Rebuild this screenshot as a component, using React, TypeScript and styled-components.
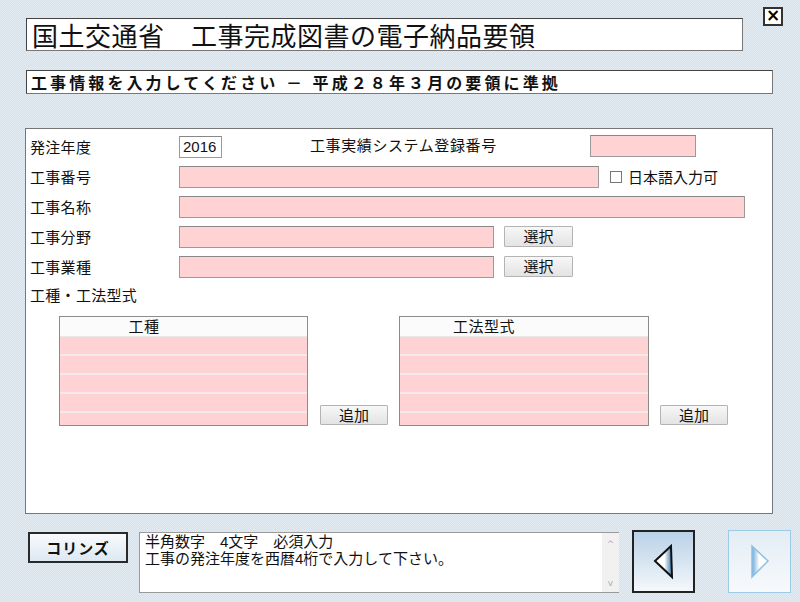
import React from 'react';
import styled, { createGlobalStyle } from 'styled-components';

const pink = '#ffd3d3';
const jp = `"Liberation Sans", "Noto Sans CJK JP", sans-serif`;

const GlobalStyle = createGlobalStyle`
  html, body {
    margin: 0;
    padding: 0;
  }
  body {
    font-family: ${jp};
    color: #111;
  }
`;

const Screen = styled.div`
  box-sizing: border-box;
  width: 800px;
  height: 602px;
  padding: 7px 9px 0 25px;
  background-color: #dce6ef;
  background-image: repeating-conic-gradient(#d6e1ec 0 25%, #e4ecf3 0 50%);
  background-size: 2px 2px;
  overflow: hidden;
`;

const Header = styled.div`
  display: flex;
  align-items: flex-start;
`;

const TitleBox = styled.div`
  box-sizing: border-box;
  width: 717px;
  height: 33px;
  margin: 11px 0 0 1px;
  padding-left: 5px;
  display: flex;
  align-items: center;
  background: #fff;
  border: 1px solid #444;
  border-right-color: #777;
  border-bottom-color: #777;
  font-size: 26px;
  letter-spacing: 0.5px;
  white-space: pre;
`;

const CloseButton = styled.button`
  box-sizing: border-box;
  width: 20px;
  height: 19px;
  margin: 0 8px 0 auto;
  padding: 0 0 2px;
  display: flex;
  align-items: center;
  justify-content: center;
  background: #fff;
  border: 2px solid #333;
  font-family: "DejaVu Sans", sans-serif;
  font-size: 17px;
  font-weight: bold;
  line-height: 1;
  color: #000;
`;

const SubTitleBox = styled.div`
  box-sizing: border-box;
  width: 747px;
  height: 24px;
  margin: 19px 0 0 1px;
  padding-left: 4px;
  display: flex;
  align-items: center;
  background: #fff;
  border: 1px solid #444;
  border-right-color: #777;
  border-bottom-color: #777;
  font-size: 16px;
  font-weight: bold;
  letter-spacing: 3.1px;
  white-space: pre;
`;

const Panel = styled.div`
  box-sizing: border-box;
  width: 748px;
  height: 386px;
  margin-top: 34px;
  padding: 7px 0 0 4px;
  background: #fff;
  border: 1px solid #777;
  display: flex;
  flex-direction: column;
  gap: 9px;
`;

const Row = styled.div`
  display: flex;
  align-items: center;
  height: 21px;
  font-size: 15px;
`;

const Label = styled.div`
  width: 149px;
  flex: none;
  font-size: 15px;
  letter-spacing: 0.3px;
`;

const Field = styled.div<{ $w: number; $white?: boolean }>`
  box-sizing: border-box;
  flex: none;
  width: ${(p) => p.$w}px;
  height: 22px;
  padding: 0 3px;
  display: flex;
  align-items: center;
  background: ${(p) => (p.$white ? '#fff' : pink)};
  border: 1px solid #9a9a9a;
  border-top-color: #888;
  font-size: 15px;
`;

const RegField = styled(Field)`
  margin-top: -2px;
`;

const RegLabel = styled.div`
  width: 280px;
  margin-left: 88px;
  margin-top: -4px;
  letter-spacing: 0.6px;
`;

const CheckBox = styled.span`
  box-sizing: border-box;
  width: 12px;
  height: 12px;
  margin: 0 6px 0 11px;
  border: 1px solid #777;
  background: #fff;
`;

const GrayButton = styled.button<{ $ml: number }>`
  box-sizing: border-box;
  flex: none;
  width: 69px;
  height: 21px;
  margin-left: ${(p) => p.$ml}px;
  padding: 0;
  background: linear-gradient(#f7f7f7, #e3e3e3);
  border: 1px solid #b4b4b4;
  border-radius: 1px;
  font-family: ${jp};
  font-size: 15px;
  line-height: 1;
  color: #111;
`;

const SectionLabel = styled.div`
  height: 18px;
  font-size: 15px;
  letter-spacing: 0.3px;
  line-height: 18px;
  margin-top: 1px;
`;

const TablesRow = styled.div`
  display: flex;
  align-items: flex-end;
  margin: 2px 0 0 29px;
`;

const Table = styled.div<{ $w: number; $ml?: number }>`
  box-sizing: border-box;
  flex: none;
  width: ${(p) => p.$w}px;
  height: 110px;
  margin-left: ${(p) => p.$ml ?? 0}px;
  border: 1px solid #8c8c8c;
  display: flex;
  flex-direction: column;
  background: #f4eaea;
`;

const TableHead = styled.div`
  height: 19px;
  flex: none;
  background: #fbfbfb;
  border-bottom: 1px solid #e8e8e8;
  display: flex;
`;

const HeadCell = styled.div`
  width: 168px;
  text-align: center;
  font-size: 15px;
  line-height: 19px;
  letter-spacing: 0.5px;
`;

const TableBody = styled.div`
  flex: 1;
  display: grid;
  grid-template-rows: repeat(4, 17px) 1fr;
  row-gap: 2px;
`;

const TableRow = styled.div`
  background: ${pink};
`;

const AddButton = styled(GrayButton)`
  width: 68px;
  height: 20px;
  margin-bottom: 1px;
`;

const Bottom = styled.div`
  display: flex;
  align-items: flex-start;
  margin-top: 16px;
  & > * {
    flex: none;
  }
`;

const CollinsButton = styled.button`
  box-sizing: border-box;
  width: 100px;
  height: 31px;
  margin: 2px 0 0 3px;
  padding: 0;
  background: linear-gradient(#f9fbfd, #dce8f3);
  border: 2px solid #2a2a2a;
  font-family: ${jp};
  font-size: 15px;
  font-weight: bold;
  letter-spacing: 1px;
  color: #111;
`;

const MessageBox = styled.div`
  box-sizing: border-box;
  width: 480px;
  height: 61px;
  margin: 2px 0 0 11px;
  display: flex;
  background: #fff;
  border: 1px solid #9a9a9a;
  border-right: none;
`;

const MessageText = styled.div`
  flex: 1;
  padding: 0 5px;
  font-size: 15px;
  line-height: 17px;
  white-space: pre;
`;

const ScrollBar = styled.div`
  width: 17px;
  background: #f1f1f1;
  display: flex;
  flex-direction: column;
  justify-content: space-between;
  align-items: center;
  padding: 6px 0 4px;
  color: #b0b0b0;
  font-size: 9px;
  font-family: "DejaVu Sans", sans-serif;
`;

const NavButton = styled.button<{ $disabled?: boolean; $ml: number }>`
  box-sizing: border-box;
  width: 63px;
  height: 63px;
  margin-left: ${(p) => p.$ml}px;
  padding: 0;
  display: flex;
  align-items: center;
  justify-content: center;
  border: ${(p) => (p.$disabled ? '1px solid #9ccbe6' : '2px solid #222')};
  background: ${(p) =>
    p.$disabled
      ? 'linear-gradient(#e3ecf5, #f7fafc)'
      : 'linear-gradient(#b9d1e7, #f4f8fb)'};
`;

const LeftArrow = () => (
  <svg width="22" height="36" viewBox="0 0 22 36">
    <defs>
      <linearGradient id="lg" x1="0" y1="0" x2="1" y2="0">
        <stop offset="0" stopColor="#ffffff" />
        <stop offset="0.55" stopColor="#ffffff" />
        <stop offset="1" stopColor="#3d78ad" />
      </linearGradient>
    </defs>
    <polygon points="2,17 18,2 19,33" fill="url(#lg)" stroke="#111" strokeWidth="2" strokeLinejoin="miter" />
  </svg>
);

const RightArrow = () => (
  <svg width="22" height="36" viewBox="0 0 22 36">
    <defs>
      <linearGradient id="rg" x1="0" y1="0" x2="1" y2="0">
        <stop offset="0" stopColor="#6fa9d6" />
        <stop offset="0.45" stopColor="#ffffff" />
        <stop offset="1" stopColor="#ffffff" />
      </linearGradient>
    </defs>
    <polygon points="3,2 19,17 3,33" fill="url(#rg)" stroke="#8cc0e2" strokeWidth="1.5" />
  </svg>
);

const rows = [0, 1, 2, 3, 4];

export default function App() {
  return (
    <Screen>
      <GlobalStyle />
      <Header>
        <TitleBox>国土交通省　工事完成図書の電子納品要領</TitleBox>
        <CloseButton>×</CloseButton>
      </Header>
      <SubTitleBox>工事情報を入力してください － 平成２８年３月の要領に準拠</SubTitleBox>

      <Panel>
        <Row>
          <Label>発注年度</Label>
          <Field $w={43} $white>2016</Field>
          <RegLabel>工事実績システム登録番号</RegLabel>
          <RegField $w={106} />
        </Row>
        <Row>
          <Label>工事番号</Label>
          <Field $w={420} />
          <CheckBox />
          <span>日本語入力可</span>
        </Row>
        <Row>
          <Label>工事名称</Label>
          <Field $w={566} />
        </Row>
        <Row>
          <Label>工事分野</Label>
          <Field $w={315} />
          <GrayButton $ml={10}>選択</GrayButton>
        </Row>
        <Row>
          <Label>工事業種</Label>
          <Field $w={315} />
          <GrayButton $ml={10}>選択</GrayButton>
        </Row>
        <SectionLabel>工種・工法型式</SectionLabel>
        <TablesRow>
          <Table $w={249}>
            <TableHead>
              <HeadCell>工種</HeadCell>
            </TableHead>
            <TableBody>
              {rows.map((r) => (
                <TableRow key={r} />
              ))}
            </TableBody>
          </Table>
          <AddButton $ml={12}>追加</AddButton>
          <Table $w={250} $ml={11}>
            <TableHead>
              <HeadCell>工法型式</HeadCell>
            </TableHead>
            <TableBody>
              {rows.map((r) => (
                <TableRow key={r} />
              ))}
            </TableBody>
          </Table>
          <AddButton $ml={11}>追加</AddButton>
        </TablesRow>
      </Panel>

      <Bottom>
        <CollinsButton>コリンズ</CollinsButton>
        <MessageBox>
          <MessageText>{'半角数字　4文字　必須入力\n工事の発注年度を西暦4桁で入力して下さい。'}</MessageText>
          <ScrollBar>
            <span>^</span>
            <span>v</span>
          </ScrollBar>
        </MessageBox>
        <NavButton $ml={13}>
          <LeftArrow />
        </NavButton>
        <NavButton $ml={33} $disabled>
          <RightArrow />
        </NavButton>
      </Bottom>
    </Screen>
  );
}
